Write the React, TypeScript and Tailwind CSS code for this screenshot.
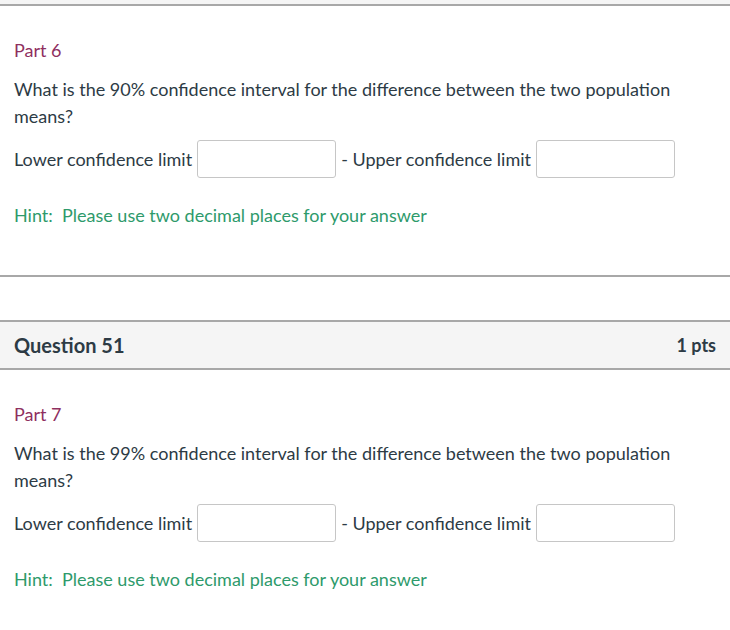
import React from 'react';

const font = { fontFamily: 'Lato, "Open Sans", sans-serif' };

function ConfidencePart({ part, level }: { part: number; level: number }) {
  return (
    <div className="px-[14px] pt-[32px] text-[18px]">
      <div className="leading-[24px] text-[#8f2f5f]">Part {part}</div>
      <p className="mt-[14px] leading-[27px] text-[#2d3b45]">
        What is the {level}% confidence interval for the difference between the two population means?
      </p>
      <div className="mt-[10px] flex items-center text-[#2d3b45]">
        <span>Lower confidence limit</span>
        <input
          type="text"
          className="ml-[5px] h-[38px] w-[139px] rounded-[3px] border border-[#c6c6c6] bg-white"
        />
        <span className="ml-[5px]">- Upper confidence limit</span>
        <input
          type="text"
          className="ml-[5px] h-[38px] w-[139px] rounded-[3px] border border-[#c6c6c6] bg-white"
        />
      </div>
      <div className="mt-[25px] leading-[24px] text-[#2e9a6b]">
        Hint:&nbsp; Please use two decimal places for your answer
      </div>
    </div>
  );
}

export default function App() {
  return (
    <div className="w-[730px] h-[630px] bg-white overflow-hidden" style={font}>
      <div className="h-[4px] bg-[#f5f5f5] border-b-2 border-[#a8a8a8] box-content" />
      <ConfidencePart part={6} level={90} />
      <div className="mt-[48px] border-t-2 border-[#a8a8a8]" />
      <div className="mt-[43px] flex h-[50px] items-center justify-between border-y-2 border-[#a8a8a8] bg-[#f5f5f5] px-[14px] font-bold text-[#2d3b45]">
        <span className="text-[20px]">Question 51</span>
        <span className="text-[18px]">1 pts</span>
      </div>
      <ConfidencePart part={7} level={99} />
    </div>
  );
}
